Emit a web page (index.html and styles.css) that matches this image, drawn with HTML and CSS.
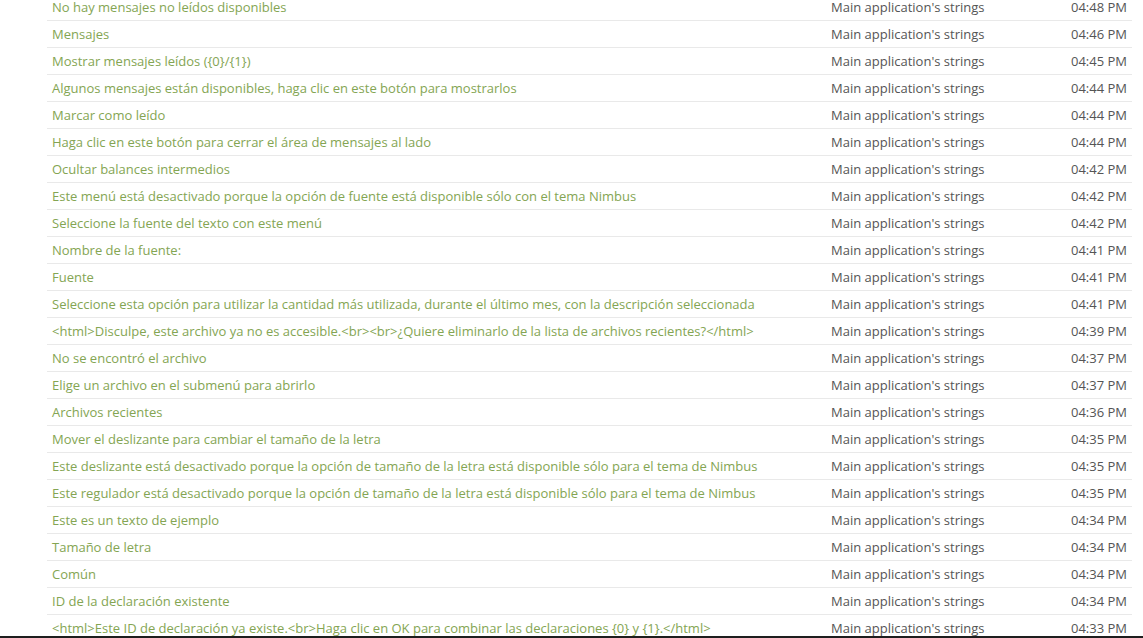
FILE: index.html
```html
<!DOCTYPE html>
<html>
<head>
<meta charset="utf-8">
<link rel="stylesheet" href="styles.css">
</head>
<body>
<div class="list">
  <div class="row"><span class="msg">No hay mensajes no leídos disponibles</span><span class="src">Main application's strings</span><span class="time">04:48 PM</span></div>
  <div class="row"><span class="msg">Mensajes</span><span class="src">Main application's strings</span><span class="time">04:46 PM</span></div>
  <div class="row"><span class="msg">Mostrar mensajes leídos ({0}/{1})</span><span class="src">Main application's strings</span><span class="time">04:45 PM</span></div>
  <div class="row"><span class="msg">Algunos mensajes están disponibles, haga clic en este botón para mostrarlos</span><span class="src">Main application's strings</span><span class="time">04:44 PM</span></div>
  <div class="row"><span class="msg">Marcar como leído</span><span class="src">Main application's strings</span><span class="time">04:44 PM</span></div>
  <div class="row"><span class="msg">Haga clic en este botón para cerrar el área de mensajes al lado</span><span class="src">Main application's strings</span><span class="time">04:44 PM</span></div>
  <div class="row"><span class="msg">Ocultar balances intermedios</span><span class="src">Main application's strings</span><span class="time">04:42 PM</span></div>
  <div class="row"><span class="msg">Este menú está desactivado porque la opción de fuente está disponible sólo con el tema Nimbus</span><span class="src">Main application's strings</span><span class="time">04:42 PM</span></div>
  <div class="row"><span class="msg">Seleccione la fuente del texto con este menú</span><span class="src">Main application's strings</span><span class="time">04:42 PM</span></div>
  <div class="row"><span class="msg">Nombre de la fuente:</span><span class="src">Main application's strings</span><span class="time">04:41 PM</span></div>
  <div class="row"><span class="msg">Fuente</span><span class="src">Main application's strings</span><span class="time">04:41 PM</span></div>
  <div class="row"><span class="msg">Seleccione esta opción para utilizar la cantidad más utilizada, durante el último mes, con la descripción seleccionada</span><span class="src">Main application's strings</span><span class="time">04:41 PM</span></div>
  <div class="row"><span class="msg">&lt;html&gt;Disculpe, este archivo ya no es accesible.&lt;br&gt;&lt;br&gt;¿Quiere eliminarlo de la lista de archivos recientes?&lt;/html&gt;</span><span class="src">Main application's strings</span><span class="time">04:39 PM</span></div>
  <div class="row"><span class="msg">No se encontró el archivo</span><span class="src">Main application's strings</span><span class="time">04:37 PM</span></div>
  <div class="row"><span class="msg">Elige un archivo en el submenú para abrirlo</span><span class="src">Main application's strings</span><span class="time">04:37 PM</span></div>
  <div class="row"><span class="msg">Archivos recientes</span><span class="src">Main application's strings</span><span class="time">04:36 PM</span></div>
  <div class="row"><span class="msg">Mover el deslizante para cambiar el tamaño de la letra</span><span class="src">Main application's strings</span><span class="time">04:35 PM</span></div>
  <div class="row"><span class="msg">Este deslizante está desactivado porque la opción de tamaño de la letra está disponible sólo para el tema de Nimbus</span><span class="src">Main application's strings</span><span class="time">04:35 PM</span></div>
  <div class="row"><span class="msg">Este regulador está desactivado porque la opción de tamaño de la letra está disponible sólo para el tema de Nimbus</span><span class="src">Main application's strings</span><span class="time">04:35 PM</span></div>
  <div class="row"><span class="msg">Este es un texto de ejemplo</span><span class="src">Main application's strings</span><span class="time">04:34 PM</span></div>
  <div class="row"><span class="msg">Tamaño de letra</span><span class="src">Main application's strings</span><span class="time">04:34 PM</span></div>
  <div class="row"><span class="msg">Común</span><span class="src">Main application's strings</span><span class="time">04:34 PM</span></div>
  <div class="row"><span class="msg">ID de la declaración existente</span><span class="src">Main application's strings</span><span class="time">04:34 PM</span></div>
  <div class="row"><span class="msg">&lt;html&gt;Este ID de declaración ya existe.&lt;br&gt;Haga clic en OK para combinar las declaraciones {0} y {1}.&lt;/html&gt;</span><span class="src">Main application's strings</span><span class="time">04:33 PM</span></div>
</div>
<div class="edge"></div>
</body>
</html>
```

FILE: styles.css
```css
html, body {
  margin: 0;
  padding: 0;
  background: #ffffff;
  overflow: hidden;
  height: 638px;
}
body {
  font-family: "Open Sans", "Liberation Sans", sans-serif;
  font-size: 13px;
}
.list {
  margin: -6px 0 0 47px;
  width: 1085px;
}
.row {
  display: grid;
  grid-template-columns: 779px 1fr auto;
  align-items: center;
  box-sizing: border-box;
  height: 27px;
  border-bottom: 1px solid #e9e9e9;
  white-space: nowrap;
}
.msg {
  padding-left: 5px;
  color: #84a553;
}
.src {
  padding-left: 5px;
  color: #555555;
}
.time {
  padding-right: 5px;
  color: #555555;
}
.edge {
  position: fixed;
  left: 0;
  right: 0;
  bottom: 0;
  height: 2px;
  background: #1e1e1e;
}
```
